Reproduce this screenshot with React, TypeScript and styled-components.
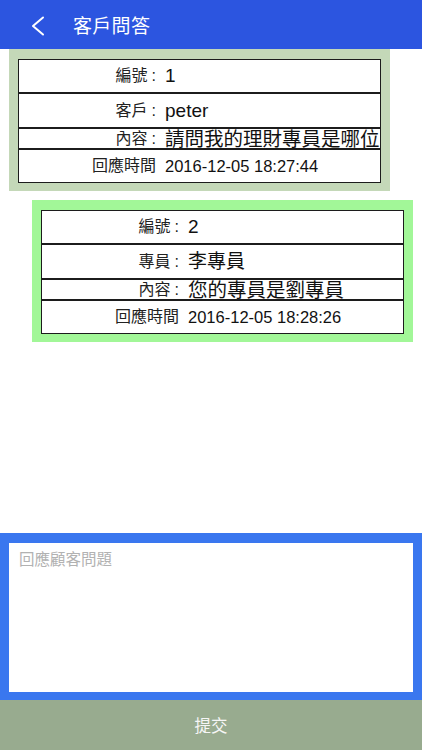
import React from "react";
import styled, { createGlobalStyle } from "styled-components";

const GlobalStyle = createGlobalStyle`
  html, body { margin: 0; padding: 0; background: #ffffff; }
  body { font-family: "Liberation Sans", "Noto Sans CJK TC", sans-serif; }
  * { box-sizing: border-box; }
`;

const Page = styled.div`
  width: 422px;
  height: 750px;
  display: flex;
  flex-direction: column;
  overflow: hidden;
  background: #ffffff;
`;

const Header = styled.header`
  height: 49px;
  flex: none;
  background: #2c55e0;
  display: flex;
  align-items: center;
  padding-left: 28px;
  color: #ffffff;
`;

const BackButton = styled.button`
  width: 20px;
  height: 24px;
  padding: 0;
  border: none;
  background: transparent;
  display: flex;
  align-items: center;
  justify-content: center;
  margin-right: 25px;
  margin-top: 2px;
`;

const Title = styled.h1`
  margin: 0;
  font-size: 19px;
  font-weight: 400;
  letter-spacing: 0.3px;
  line-height: 1;
  margin-top: 3px;
`;

const Feed = styled.main`
  flex: 1;
  display: flex;
  flex-direction: column;
  gap: 9px;
`;

const Card = styled.section<{ $bg: string; $offset: number }>`
  width: 381px;
  margin-left: ${(p) => p.$offset}px;
  padding: 10px 9px 8px;
  background: ${(p) => p.$bg};
`;

const Table = styled.div`
  display: flex;
  flex-direction: column;
  background: #ffffff;
`;

const Row = styled.div<{ $h: number }>`
  height: ${(p) => p.$h}px;
  display: flex;
  align-items: center;
  border: 1px solid #1c1c1c;
  color: #1a1a1a;
`;

const Label = styled.div`
  width: 137px;
  flex: none;
  text-align: right;
  font-size: 16px;
  line-height: 18px;
  color: #222222;
  white-space: nowrap;
`;

const Colon = styled.span`
  margin-left: 4px;
  font-family: "Liberation Sans", sans-serif;
`;

const Value = styled.div<{ $size: number }>`
  margin-left: 9px;
  font-size: ${(p) => p.$size}px;
  line-height: 20px;
  white-space: nowrap;
  color: #111111;
`;

const Composer = styled.div`
  flex: none;
  background: #3a77ef;
  padding: 10px 9px 8px;
`;

const Input = styled.textarea`
  display: block;
  width: 100%;
  height: 149px;
  border: none;
  outline: none;
  resize: none;
  background: #ffffff;
  padding: 7px 10px;
  font-family: "Liberation Sans", "Noto Sans CJK TC", sans-serif;
  font-size: 15.5px;
  line-height: 20px;
  color: #333333;
  &::placeholder { color: #b2b2b2; }
`;

const Submit = styled.button`
  flex: none;
  height: 50px;
  width: 100%;
  border: none;
  background: #98ab8f;
  color: #f6f6f6;
  font-family: "Liberation Sans", "Noto Sans CJK TC", sans-serif;
  font-size: 16.5px;
  padding: 0;
  padding-bottom: 1px;
`;

type Item = {
  who: string;
  name: string;
  id: string;
  content: string;
  time: string;
  bg: string;
  offset: number;
};

const items: Item[] = [
  {
    who: "客戶",
    name: "peter",
    id: "1",
    content: "請問我的理財專員是哪位",
    time: "2016-12-05 18:27:44",
    bg: "#c4d8b8",
    offset: 9,
  },
  {
    who: "專員",
    name: "李專員",
    id: "2",
    content: "您的專員是劉專員",
    time: "2016-12-05 18:28:26",
    bg: "#a2f798",
    offset: 32,
  },
];

const Chevron = () => (
  <svg width="18" height="22" viewBox="0 0 18 22" fill="none">
    <polyline
      points="14,2.5 4,11 14,19.5"
      stroke="#ffffff"
      strokeWidth="2"
      strokeLinecap="round"
      strokeLinejoin="round"
    />
  </svg>
);

export default function App() {
  return (
    <>
      <GlobalStyle />
      <Page>
        <Header>
          <BackButton aria-label="back">
            <Chevron />
          </BackButton>
          <Title>客戶問答</Title>
        </Header>
        <Feed>
          {items.map((it) => (
            <Card key={it.id} $bg={it.bg} $offset={it.offset}>
              <Table>
                <Row $h={34}>
                  <Label>
                    編號<Colon>:</Colon>
                  </Label>
                  <Value $size={19}>{it.id}</Value>
                </Row>
                <Row $h={35}>
                  <Label>
                    {it.who}
                    <Colon>:</Colon>
                  </Label>
                  <Value $size={19}>{it.name}</Value>
                </Row>
                <Row $h={21}>
                  <Label>
                    內容<Colon>:</Colon>
                  </Label>
                  <Value $size={19.5}>{it.content}</Value>
                </Row>
                <Row $h={34}>
                  <Label>回應時間</Label>
                  <Value $size={16.5}>{it.time}</Value>
                </Row>
              </Table>
            </Card>
          ))}
        </Feed>
        <Composer>
          <Input placeholder="回應顧客問題" />
        </Composer>
        <Submit>提交</Submit>
      </Page>
    </>
  );
}
